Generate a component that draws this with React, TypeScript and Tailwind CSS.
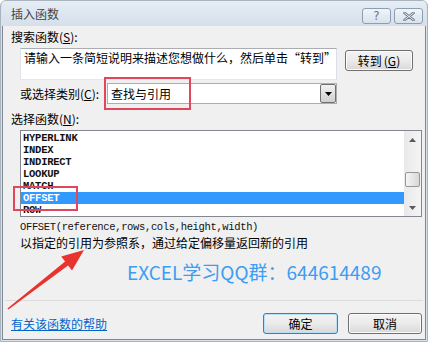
import React from 'react';

const cjk = "font-['Noto_Sans_CJK_SC','Noto_Sans',sans-serif]";
const mono = "font-['Liberation_Mono','DejaVu_Sans_Mono',monospace]";

const functions = ['HYPERLINK', 'INDEX', 'INDIRECT', 'LOOKUP', 'MATCH', 'OFFSET', 'ROW'];

const Arrow = ({ down }: { down?: boolean }) => (
  <svg width="7" height="4" viewBox="0 0 7 4">
    <path d={down ? 'M0 0 H7 L3.5 4 Z' : 'M0 4 H7 L3.5 0 Z'} fill="#5a5a5a" />
  </svg>
);

const Button = ({ label, mnemonic, primary, className = '' }: { label: string; mnemonic?: string; primary?: boolean; className?: string }) => (
  <div
    className={`flex items-center justify-center h-[21px] rounded-[3px] border text-[12px] leading-[16px] text-black bg-gradient-to-b from-[#f3f3f3] via-[#ebebeb] to-[#d8d8d8] ${
      primary ? 'border-[#3c7fb1] shadow-[inset_0_0_0_1px_#b7dff8]' : 'border-[#707070] shadow-[inset_0_0_0_1px_#fbfbfb]'
    } ${className}`}
  >
    <span>{label}</span>
    {mnemonic && (
      <span className="ml-[2px]">
        (<u>{mnemonic}</u>)
      </span>
    )}
  </div>
);

export default function App() {
  return (
    <div className={`relative w-[428px] h-[342px] flex flex-col border border-[#a9b4c0] rounded-t-[6px] bg-[#dae3ed] px-[1px] pb-[1px] overflow-hidden ${cjk}`}>
      {/* Title bar */}
      <div className="h-[25px] shrink-0 flex items-start bg-gradient-to-b from-[#e6edf5] to-[#d5dfea]">
        <span className="pl-[9px] pt-[5px] text-[12px] leading-[16px] text-[#444]">插入函数</span>
        <div className="ml-auto flex gap-[3px] pt-[7px] pr-[3px]">
          <div className="w-[29px] h-[16px] rounded-[3px] border border-[#8d9eb3] bg-gradient-to-b from-[#f1f5f9] to-[#d9e2ec] flex items-center justify-center text-[12px] leading-[12px] text-[#6b7684] font-['DejaVu_Sans',sans-serif]">
            ?
          </div>
          <div className="w-[29px] h-[16px] rounded-[3px] border border-[#8d9eb3] bg-gradient-to-b from-[#f1f5f9] to-[#d9e2ec] flex items-center justify-center">
            <svg width="12" height="9" viewBox="0 0 12 9">
              <path d="M1.5 1 L10.5 8 M10.5 1 L1.5 8" stroke="#6b7684" strokeWidth="2.6" strokeLinecap="round" />
              <path d="M1.5 1 L10.5 8 M10.5 1 L1.5 8" stroke="#eef2f6" strokeWidth="1" strokeLinecap="round" />
            </svg>
          </div>
        </div>
      </div>

      {/* Body */}
      <div className="flex-1 flex flex-col bg-[#f0f0f0] border border-t-0 border-[#7d8893] text-[12px] text-black">
        <div className="mt-[3px] pl-[8px] h-[16px] leading-[16px]">
          搜索函数(<u>S</u>):
        </div>

        <div className="mt-[3px] flex items-start">
          <div className="ml-[17px] w-[317px] h-[32px] bg-white border border-[#abadb3] border-l-[#e2e3ea] border-r-[#dbdfe6] border-b-[#e3e9ef] pl-[3px] pt-[1px] leading-[16px] whitespace-nowrap overflow-hidden">
            请输入一条简短说明来描述您想做什么，然后单击“转到”
          </div>
          <Button label="转到" mnemonic="G" className="ml-[8px] mt-[2px] w-[68px]" />
        </div>

        <div className="mt-[3px] flex items-center h-[21px]">
          <div className="ml-[17px] w-[87px] leading-[16px]">
            或选择类别(<u>C</u>):
          </div>
          <div className="w-[230px] h-[21px] flex bg-white border border-[#abadb3]">
            <span className="flex-1 pl-[3px] leading-[19px]">查找与引用</span>
            <div className="w-[16px] h-full border border-[#707070] rounded-[2px] bg-gradient-to-b from-[#f2f2f2] to-[#cfcfcf] flex items-center justify-center">
              <svg width="7" height="4" viewBox="0 0 7 4">
                <path d="M0 0 H7 L3.5 4 Z" fill="#000" />
              </svg>
            </div>
          </div>
        </div>

        <div className="mt-[7px] pl-[8px] h-[16px] leading-[16px]">
          选择函数(<u>N</u>):
        </div>

        {/* Function list */}
        <div className="mt-[3px] ml-[17px] w-[402px] h-[87px] bg-white border border-[#828790] flex">
          <div className={`flex-1 pt-[1px] overflow-hidden ${mono}`}>
            {functions.map((f) => (
              <div
                key={f}
                className={`h-[12px] leading-[12px] pl-[2px] text-[10.5px] tracking-[-0.25px] font-bold ${
                  f === 'OFFSET' ? 'bg-[#3399ff] text-white' : 'text-[#111]'
                }`}
              >
                {f}
              </div>
            ))}
          </div>
          <div className="w-[17px] h-full flex flex-col items-center bg-gradient-to-r from-[#e9e9e9] to-[#f4f4f4]">
            <div className="h-[17px] flex items-center justify-center">
              <Arrow />
            </div>
            <div className="mt-[24px] w-[15px] h-[15px] rounded-[2px] border border-[#979797] bg-gradient-to-r from-[#f5f5f5] to-[#d8d8d8]" />
            <div className="mt-auto h-[17px] flex items-center justify-center">
              <Arrow down />
            </div>
          </div>
        </div>

        <div className={`mt-[4px] ml-[17px] h-[12px] leading-[12px] text-[10.5px] tracking-[-0.35px] text-[#111] ${mono}`}>
          OFFSET(reference,rows,cols,height,width)
        </div>
        <div className="mt-[2px] ml-[17px] h-[16px] leading-[16px]">
          以指定的引用为参照系，通过给定偏移量返回新的引用
        </div>

        <div className="mt-[9px] ml-[124px] h-[24px] leading-[24px] text-[19px] text-[#3c9df2] whitespace-nowrap">
          EXCEL学习QQ群：644614489
        </div>

        <div className="mt-[16px] mx-[2px] h-[1px] bg-[#dcdcdc]" />

        <div className="mt-[12px] flex items-center h-[21px]">
          <span className="ml-[8px] text-[#0066cc] underline leading-[16px]">有关该函数的帮助</span>
          <Button label="确定" primary className="ml-auto w-[75px]" />
          <Button label="取消" className="ml-[10px] mr-[3px] w-[74px]" />
        </div>
      </div>

      {/* Annotations */}
      <div className="absolute left-[103px] top-[76px] w-[87px] h-[33px] border-[2px] border-[#e0475d]" />
      <div className="absolute left-[12px] top-[185px] w-[65px] h-[25px] border-[2px] border-[#e0475d]" />
      <svg className="absolute left-0 top-0 pointer-events-none" width="428" height="342" viewBox="0 0 428 342">
        <polygon
          points="6.4,307.6 64.1,260.5 60.2,255.6 83,249 71,269.4 67.1,264.5 7.4,308.6"
          fill="#e8332e"
        />
      </svg>
    </div>
  );
}
